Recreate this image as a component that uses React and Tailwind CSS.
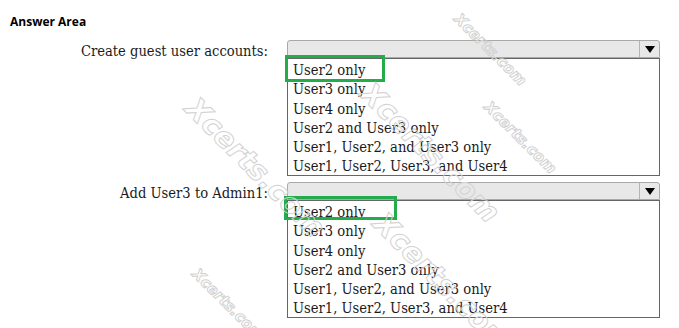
import React from "react";

const options = [
  "User2 only",
  "User3 only",
  "User4 only",
  "User2 and User3 only",
  "User1, User2, and User3 only",
  "User1, User2, User3, and User4",
];

const Dropdown = ({ boxClass }) => (
  <div className="relative w-[373px]">
    <div className="flex h-[18px] rounded-t-[3px] border border-[#a9a9a9] bg-[#e8e8e8]">
      <div className="flex-1" />
      <div className="flex w-[20px] items-center justify-center border-l border-[#b4b4b4]">
        <span className="block h-0 w-0 border-x-[5px] border-t-[7px] border-x-transparent border-t-black" />
      </div>
    </div>
    <ul className="h-[118px] border border-[#666] bg-white px-[5px] pt-[1px]">
      {options.map((o) => (
        <li key={o} className="h-[19.3px] leading-[19px] whitespace-nowrap">
          {o}
        </li>
      ))}
    </ul>
    <div className={"absolute border-[3px] border-[#22ac4c] " + boxClass} />
  </div>
);

const Row = ({ label, boxClass }) => (
  <div className="flex items-start">
    <div className="w-[287px] pr-[19px] pt-[1px] text-right leading-[19px]">{label}</div>
    <Dropdown boxClass={boxClass} />
  </div>
);

// watermark centres, taken from the screenshot
const marks = [
  "left-[490px] top-[50px] text-[15px]",
  "left-[520px] top-[138px] text-[15px]",
  "left-[255px] top-[168px] text-[29px]",
  "left-[430px] top-[153px] text-[29px]",
  "left-[443px] top-[283px] text-[29px]",
  "left-[228px] top-[305px] text-[15px]",
];

export default function App() {
  return (
    <div className="relative h-[328px] w-[679px] overflow-hidden bg-white text-[14.6px] text-[#1a1a1a] [font-stretch:condensed] [font-family:'DejaVu_Serif_Condensed','DejaVu_Serif',serif]">
      <div className="pl-[10px] pt-[14px] text-[12px] font-bold leading-[16px] text-black [font-stretch:normal] [font-family:'Open_Sans',sans-serif]">
        Answer Area
      </div>
      <div className="mt-[10px] flex flex-col gap-[6px]">
        <Row label="Create guest user accounts:" boxClass="left-[-2px] top-[15px] h-[27px] w-[100px]" />
        <Row label="Add User3 to Admin1:" boxClass="left-[-3px] top-[14px] h-[24px] w-[113px]" />
      </div>
      {marks.map((m) => (
        <span
          key={m}
          className={
            "pointer-events-none absolute -translate-x-1/2 -translate-y-1/2 rotate-45 whitespace-nowrap font-bold italic leading-none text-transparent [font-stretch:normal] [-webkit-text-stroke:1px_#d2d2d2] [font-family:'DejaVu_Sans',sans-serif] " +
            m
          }
        >
          Xcerts.com
        </span>
      ))}
    </div>
  );
}
